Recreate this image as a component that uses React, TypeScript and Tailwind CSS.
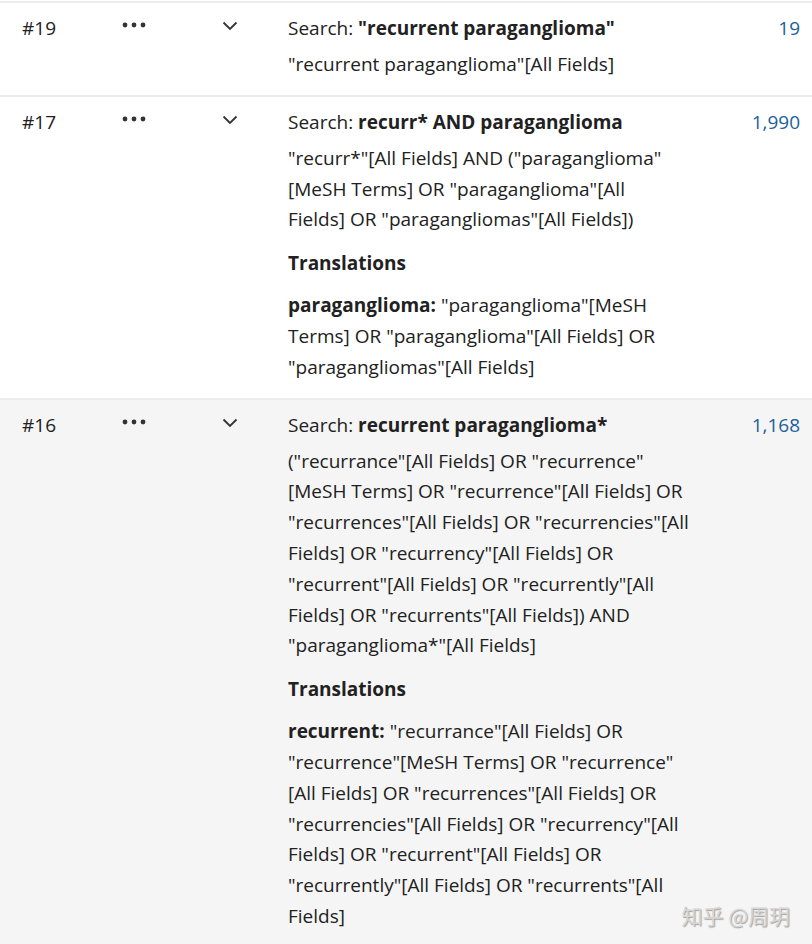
import React from 'react';

type Row = {
  id: string;
  search: React.ReactNode;
  details: string[];
  translations?: { term: string; lines: string[] }[];
  count: string;
  shaded?: boolean;
};

const rows: Row[] = [
  {
    id: '#19',
    search: <>"recurrent paraganglioma"</>,
    details: ['"recurrent paraganglioma"[All Fields]'],
    count: '19',
  },
  {
    id: '#17',
    search: <>recurr* AND paraganglioma</>,
    details: [
      '"recurr*"[All Fields] AND ("paraganglioma"',
      '[MeSH Terms] OR "paraganglioma"[All',
      'Fields] OR "paragangliomas"[All Fields])',
    ],
    translations: [
      {
        term: 'paraganglioma:',
        lines: [
          '"paraganglioma"[MeSH',
          'Terms] OR "paraganglioma"[All Fields] OR',
          '"paragangliomas"[All Fields]',
        ],
      },
    ],
    count: '1,990',
  },
  {
    id: '#16',
    search: <>recurrent paraganglioma*</>,
    details: [
      '("recurrance"[All Fields] OR "recurrence"',
      '[MeSH Terms] OR "recurrence"[All Fields] OR',
      '"recurrences"[All Fields] OR "recurrencies"[All',
      'Fields] OR "recurrency"[All Fields] OR',
      '"recurrent"[All Fields] OR "recurrently"[All',
      'Fields] OR "recurrents"[All Fields]) AND',
      '"paraganglioma*"[All Fields]',
    ],
    translations: [
      {
        term: 'recurrent:',
        lines: [
          '"recurrance"[All Fields] OR',
          '"recurrence"[MeSH Terms] OR "recurrence"',
          '[All Fields] OR "recurrences"[All Fields] OR',
          '"recurrencies"[All Fields] OR "recurrency"[All',
          'Fields] OR "recurrent"[All Fields] OR',
          '"recurrently"[All Fields] OR "recurrents"[All',
          'Fields]',
        ],
      },
    ],
    count: '1,168',
    shaded: true,
  },
];

const Dots = () => (
  <svg width="24" height="6" viewBox="0 0 24 6" className="text-[#333]">
    <circle cx="3" cy="3" r="2.4" fill="currentColor" />
    <circle cx="12" cy="3" r="2.4" fill="currentColor" />
    <circle cx="21" cy="3" r="2.4" fill="currentColor" />
  </svg>
);

const Chevron = () => (
  <svg width="16" height="10" viewBox="0 0 16 10" fill="none" className="text-[#333]">
    <path d="M1.5 1.5 L8 8 L14.5 1.5" stroke="currentColor" strokeWidth="1.8" />
  </svg>
);

const HistoryRow: React.FC<{ row: Row }> = ({ row }) => (
  <div
    className={`flex border-t-2 border-[#ececec] pt-[10px] pb-[15px] ${
      row.shaded ? 'bg-[#f5f5f5]' : 'bg-white'
    }`}
  >
    <div className="w-[100px] pl-[22px] leading-[31px]">{row.id}</div>
    <div className="w-[100px] h-[31px] flex items-center pl-[22px] pb-[7px]">
      <Dots />
    </div>
    <div className="w-[88px] h-[31px] flex items-center pl-[22px] pb-[5px]">
      <Chevron />
    </div>
    <div className="flex-1">
      <div className="leading-[31px]">
        Search: <span className="font-bold">{row.search}</span>
      </div>
      <div className="mt-[5px] leading-[30.8px]">
        {row.details.map((line, i) => (
          <div key={i}>{line}</div>
        ))}
      </div>
      {row.translations && (
        <div className="mt-[13px]">
          <div className="font-bold leading-[31px]">Translations</div>
          {row.translations.map((t) => (
            <div key={t.term} className="mt-[11px] leading-[30.8px]">
              {t.lines.map((line, i) => (
                <div key={i}>
                  {i === 0 && <span className="font-bold">{t.term} </span>}
                  {line}
                </div>
              ))}
            </div>
          ))}
        </div>
      )}
    </div>
    <div className="pr-[12px] leading-[31px] text-[#205f9b] text-right">{row.count}</div>
  </div>
);

export default function App() {
  return (
    <div
      className="relative w-[812px] h-[944px] overflow-hidden bg-white pt-[1px] text-[19px] text-[#212121]"
      style={{ fontFamily: '"Open Sans", "Noto Sans CJK SC", sans-serif' }}
    >
      {rows.map((r) => (
        <HistoryRow key={r.id} row={r} />
      ))}
      <div
        className="absolute right-[22px] bottom-[13px] text-[21px] text-[#d6d6d6] [text-shadow:1px_1px_1px_#a0a0a0]"
        style={{ fontFamily: '"Noto Sans CJK SC", sans-serif' }}
      >
        知乎 @周玥
      </div>
    </div>
  );
}
